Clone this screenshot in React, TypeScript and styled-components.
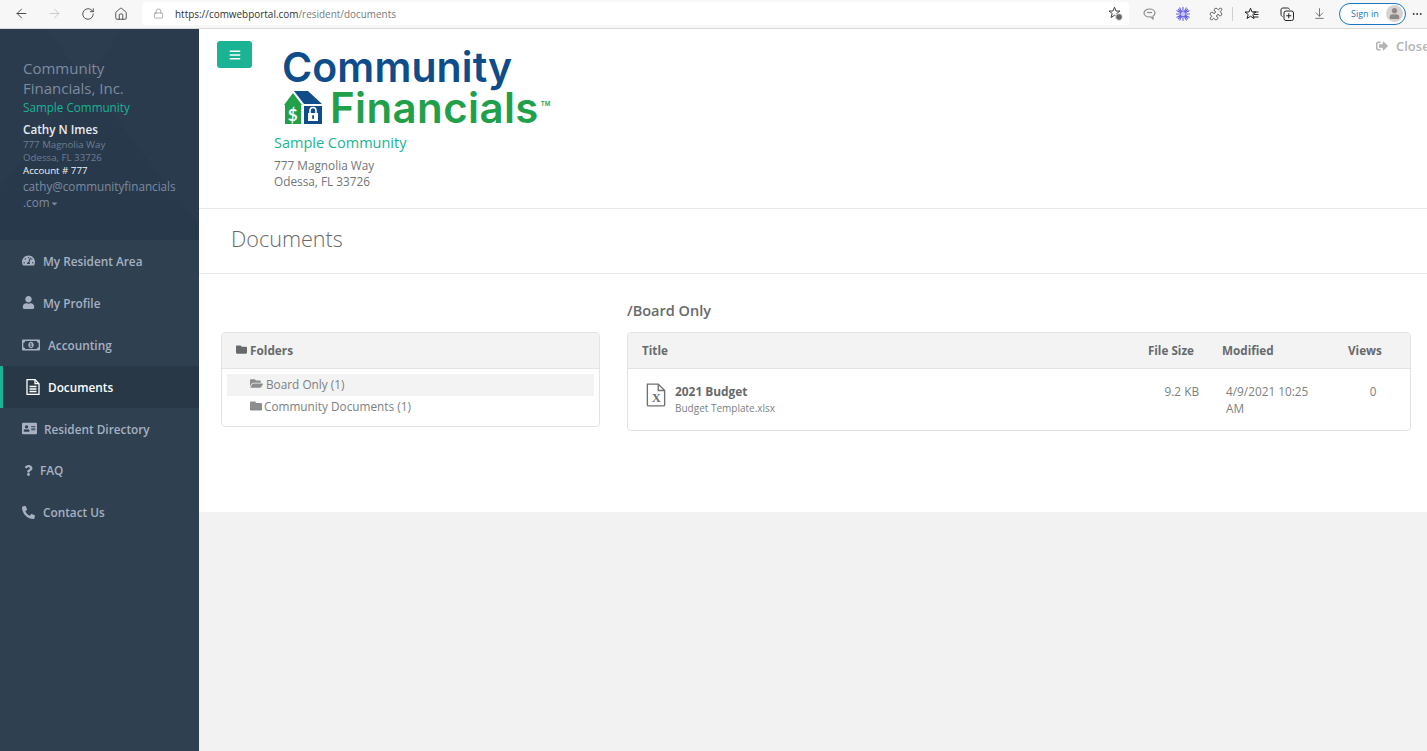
import React from "react";
import styled, { createGlobalStyle } from "styled-components";
import {
  ArrowDownToLine,
  ArrowLeft,
  ArrowRight,
  RotateCw,
  Home,
  Lock,
  Puzzle,
  MoreHorizontal,
} from "lucide-react";
import {
  FaAddressCard,
  FaBars,
  FaCaretDown,
  FaFolder,
  FaFolderOpen,
  FaPhone,
  FaQuestion,
  FaRegMoneyBillAlt,
  FaSignOutAlt,
  FaTachometerAlt,
  FaUser,
} from "react-icons/fa";

const GlobalStyle = createGlobalStyle`
  html, body {
    margin: 0;
    padding: 0;
    height: 100%;
    overflow: hidden;
    background: #f2f2f2;
    font-family: "Open Sans", "Liberation Sans", sans-serif;
    color: #676a6c;
  }
  * { box-sizing: border-box; }
`;

const Window = styled.div`
  width: 1427px;
  height: 751px;
  display: flex;
  flex-direction: column;
  overflow: hidden;
`;

/* browser chrome */
const Toolbar = styled.div`
  height: 29px;
  flex-shrink: 0;
  display: flex;
  align-items: center;
  background: #f7f7f7;
  border-bottom: 1px solid #d9d9d9;
  padding: 0 0 1px 5px;
`;

const ToolButton = styled.span<{ $faded?: boolean; $width?: number }>`
  width: ${({ $width }) => $width || 33}px;
  height: 24px;
  flex-shrink: 0;
  display: flex;
  align-items: center;
  justify-content: center;
  color: ${({ $faded }) => ($faded ? "#c4c4c4" : "#333")};
`;

const UrlBar = styled.div`
  width: 988px;
  height: 23px;
  margin-left: 5px;
  margin-right: 4px;
  padding: 0 6px 0 11px;
  display: flex;
  align-items: center;
  background: #fff;
  border-radius: 4px;
  font-size: 9.95px;
  color: #7a7a7a;
`;

const UrlHost = styled.span`
  margin-left: 11px;
  color: #333;
`;

const UrlRest = styled.span`
  flex: 1;
`;

const Divider = styled.span`
  width: 1px;
  height: 14px;
  flex-shrink: 0;
  background: #d0d0d0;
`;

const SignIn = styled.div`
  width: 67px;
  height: 22px;
  flex-shrink: 0;
  margin-left: 3px;
  padding: 0 2px 0 11px;
  display: flex;
  align-items: center;
  justify-content: space-between;
  border: 1px solid #1a76c2;
  border-radius: 11px;
  background: #fff;
  font-size: 9px;
  color: #1a76c2;
`;

const Avatar = styled.span`
  width: 17px;
  height: 17px;
  border-radius: 50%;
  background: #d6d3d0;
  display: flex;
  align-items: center;
  justify-content: center;
`;

/* page */
const Page = styled.div`
  flex: 1;
  display: flex;
  min-height: 0;
`;

const Sidebar = styled.aside`
  width: 199px;
  flex-shrink: 0;
  background: #2f4050;
`;

const Profile = styled.div`
  height: 211px;
  padding: 29px 10px 0 23px;
  background:
    linear-gradient(128deg, rgba(255, 255, 255, 0.012) 0 34%, transparent 34%),
    linear-gradient(52deg, transparent 58%, rgba(255, 255, 255, 0.01) 58%),
    #28394b;
`;

const CompanyName = styled.div`
  width: 120px;
  font-size: 15px;
  line-height: 20px;
  color: #7d8ba0;
`;

const CommunityName = styled.div`
  margin-top: 1px;
  font-size: 11.7px;
  line-height: 17px;
  color: #1ab394;
`;

const UserName = styled.div`
  margin-top: 5px;
  font-size: 11.7px;
  line-height: 17px;
  font-weight: 600;
  color: #e8ebef;
`;

const AddressLine = styled.div`
  font-size: 9.7px;
  line-height: 13px;
  color: #6d7d94;
`;

const AccountLine = styled.div`
  font-size: 9.7px;
  line-height: 14px;
  color: #f0f2f4;
`;

const Email = styled.div`
  font-size: 11.7px;
  line-height: 16px;
  white-space: nowrap;
  color: #7d8ba0;

  svg {
    width: 9px;
    height: 9px;
    vertical-align: -1px;
  }
`;

const NavList = styled.nav`
  display: flex;
  flex-direction: column;
`;

const NavItem = styled.a<{ $active?: boolean; $gap: number; $indent?: number }>`
  height: 41.9px;
  display: flex;
  align-items: center;
  gap: ${({ $gap }) => $gap}px;
  padding-left: ${({ $indent }) => $indent || 22}px;
  border-left: ${({ $active }) => ($active ? "3px solid #1ab394" : "none")};
  background: ${({ $active }) => ($active ? "#293846" : "transparent")};
  font-size: 11.8px;
  font-weight: 600;
  color: ${({ $active }) => ($active ? "#fff" : "#a7b1c2")};
`;

const Main = styled.main`
  flex: 1;
  min-width: 0;
  position: relative;
  display: flex;
  flex-direction: column;
`;

const TopSection = styled.header`
  height: 180px;
  flex-shrink: 0;
  display: flex;
  align-items: flex-start;
  padding: 12px 0 0 18px;
  background: #fff;
  border-bottom: 1px solid #e7eaec;
`;

const MenuButton = styled.button`
  width: 35px;
  height: 27px;
  padding: 0;
  display: flex;
  align-items: center;
  justify-content: center;
  border: 0;
  border-radius: 3px;
  background: #1ab394;
  color: #fff;
`;

const Brand = styled.div`
  margin-left: 22px;
`;

const Logo = styled.div`
  width: 290px;
  height: 83px;
  margin-top: 6px;
  display: flex;
  flex-direction: column;
  font-family: "Inter", sans-serif;
  font-weight: 600;
`;

const LogoTop = styled.div`
  margin: 2px 0 0 8px;
  font-size: 41px;
  line-height: 36px;
  letter-spacing: 0.1px;
  color: #0f4c8a;
`;

const LogoBottom = styled.div`
  height: 33px;
  display: flex;
  align-items: center;
  margin: 6px 0 0 10px;
  font-size: 42px;
  line-height: 33px;
  letter-spacing: 0.4px;
  color: #22a049;
`;

const LogoMark = styled.svg`
  margin-right: 8px;
  flex-shrink: 0;
`;

const Tm = styled.sup`
  font-size: 6px;
  line-height: 1;
  margin: -8px 0 0 2px;
  letter-spacing: 0;
  color: #22a049;
`;

const BrandCommunity = styled.div`
  margin-top: 3px;
  font-size: 14.5px;
  line-height: 20px;
  color: #1ab394;
`;

const BrandAddress = styled.div`
  margin-top: 4px;
  font-size: 11.8px;
  line-height: 16px;
  color: #737577;
`;

const CloseLink = styled.a`
  position: absolute;
  top: 9px;
  left: 1177px;
  display: flex;
  align-items: center;
  gap: 8px;
  font-size: 13px;
  font-weight: 600;
  line-height: 16px;
  white-space: nowrap;
  color: #b3b3b3;
`;

const TitleSection = styled.div`
  height: 65px;
  flex-shrink: 0;
  display: flex;
  align-items: center;
  padding: 0 0 5px 32px;
  background: #fff;
  border-bottom: 1px solid #e7eaec;
`;

const PageTitle = styled.h1`
  margin: 0;
  font-size: 21.6px;
  font-weight: 300;
  color: #676a6c;
`;

const Content = styled.section`
  height: 238px;
  flex-shrink: 0;
  display: grid;
  grid-template-columns: 379px 784px;
  column-gap: 27px;
  align-items: start;
  padding: 27px 0 0 22px;
  background: #fff;
`;

const Footer = styled.div`
  flex: 1;
  background: #f2f2f2;
`;

const LeftColumn = styled.div`
  padding-top: 31px;
`;

const PathTitle = styled.h3`
  margin: 0 0 11px;
  font-size: 14.5px;
  line-height: 20px;
  font-weight: 600;
  color: #676a6c;
`;

const Panel = styled.div<{ $height: number }>`
  height: ${({ $height }) => $height}px;
  border: 1px solid #e3e3e3;
  border-radius: 4px;
  overflow: hidden;
`;

const PanelHeading = styled.div`
  height: 36px;
  display: flex;
  align-items: center;
  gap: 3px;
  padding: 0 0 2px 14px;
  background: #f3f3f3;
  border-bottom: 1px solid #e3e3e3;
  font-size: 11.8px;
  font-weight: 700;
  color: #676a6c;
`;

const FolderList = styled.div`
  padding: 5px;
`;

const FolderRow = styled.div<{ $selected?: boolean }>`
  height: 22px;
  padding: 0 0 3px 23px;
  display: flex;
  align-items: center;
  gap: ${({ $selected }) => ($selected ? 3 : 2)}px;
  background: ${({ $selected }) => ($selected ? "#f3f3f3" : "transparent")};
  font-size: 11.8px;
  color: #7d7f81;
  svg {
    color: #8b8d8f;
  }
`;

const FileGrid = styled.div`
  display: grid;
  grid-template-columns: 506px 74px 126px 76px;
`;

const HeadCell = styled.div<{ $align?: string }>`
  height: 36px;
  display: flex;
  align-items: center;
  justify-content: ${({ $align }) => $align || "flex-start"};
  padding: 0 14px 2px 14px;
  background: #f3f3f3;
  border-bottom: 1px solid #e3e3e3;
  font-size: 11.7px;
  font-weight: 700;
  white-space: nowrap;
  color: #676a6c;
`;

const TitleCell = styled.div`
  display: flex;
  align-items: flex-start;
  gap: 9px;
  padding: 14px 0 0 18px;
`;

const FileName = styled.div`
  font-size: 11.9px;
  line-height: 16px;
  font-weight: 700;
  color: #676a6c;
`;

const FileMeta = styled.div`
  font-size: 10px;
  line-height: 18px;
  color: #7d7f81;
`;

const DataCell = styled.div<{ $align: string; $left: number; $right: number }>`
  padding: 14px ${({ $right }) => $right}px 0 ${({ $left }) => $left}px;
  font-size: 11.8px;
  line-height: 16.5px;
  color: #7d7f81;
  text-align: ${({ $align }) => $align};
`;

const DocumentIcon: React.FC<{ size?: number }> = () => (
  <svg width="14" height="16" viewBox="0 0 14 16" fill="none" stroke="currentColor" strokeWidth="1.3">
    <path d="M1 .7h8l4 4v10.6H1z" />
    <path d="M9 .7v4h4" />
    <path d="M3.5 7.5h7M3.5 10h7M3.5 12.5h7" />
  </svg>
);

const navItems = [
  { label: "My Resident Area", Icon: FaTachometerAlt, size: 13, gap: 8 },
  { label: "My Profile", Icon: FaUser, size: 13, gap: 8 },
  { label: "Accounting", Icon: FaRegMoneyBillAlt, size: 18, gap: 8 },
  { label: "Documents", Icon: DocumentIcon, size: 16, gap: 8, indent: 23, active: true },
  { label: "Resident Directory", Icon: FaAddressCard, size: 15, gap: 7 },
  { label: "FAQ", Icon: FaQuestion, size: 11, gap: 6, indent: 23 },
  { label: "Contact Us", Icon: FaPhone, size: 13, gap: 8, flip: true },
];

const LogoIcon = () => (
  <LogoMark width="38" height="33" viewBox="0 0 38 33">
    <path d="M0 14 9 2l9 12h-1v19H1V14z" fill="#22a049" />
    <path d="M10 0h14l14 13H20z" fill="#0f4c8a" />
    <rect x="20" y="15" width="18" height="18" fill="#0f4c8a" />
    <rect x="24" y="22" width="10" height="8" fill="#fff" />
    <path d="M26 22v-2.5a3 3 0 0 1 6 0V22" fill="none" stroke="#fff" strokeWidth="1.6" />
    <rect x="28.2" y="24.3" width="1.8" height="3.5" fill="#0f4c8a" />
    <text x="9" y="30" textAnchor="middle" fontSize="17" fontWeight="700" fontFamily="Lato" fill="#fff">
      $
    </text>
  </LogoMark>
);

const ExcelFileIcon = () => (
  <svg width="20" height="24" viewBox="0 0 22 26" fill="none" stroke="#6f7173" strokeWidth="1.5">
    <path d="M1.5 1h12l7 7v16a1 1 0 0 1-1 1h-17a1 1 0 0 1-1-1z" />
    <path d="M13.5 1v7h7" />
    <text x="11.5" y="21" textAnchor="middle" fontSize="14" fontWeight="700" fontFamily="Liberation Serif" stroke="none" fill="#6f7173">
      X
    </text>
  </svg>
);

const starPath = "M6.5 1.2 8 5h4l-3.2 2.5L10 11.5 6.5 9.2 3 11.5l1.2-4L1 5h4z";

const BadgedStarIcon = () => (
  <svg width="15" height="15" viewBox="0 0 15 15" fill="none" stroke="#444" strokeWidth="1">
    <path d={starPath} />
    <circle cx="11" cy="11" r="3.4" fill="#666" stroke="#fff" strokeWidth=".8" />
  </svg>
);

const CommentIcon = () => (
  <svg width="13" height="12" viewBox="0 0 13 12" fill="none" stroke="#8d8d8d" strokeWidth="1.2">
    <path d="M6.5 1C3.4 1 1 2.8 1 5s2.4 4 5.5 4c.5 0 1 0 1.4-.1L10 11V8.2C11.2 7.5 12 6.3 12 5c0-2.2-2.4-4-5.5-4z" />
    <path d="M4 4.5h5" />
  </svg>
);

const BurstIcon = () => (
  <svg width="14" height="14" viewBox="0 0 14 14" stroke="#6a63e8" strokeWidth="1.1">
    <path d="M7 0v14M0 7h14M2 2l10 10M12 2 2 12M3.5 .5l7 13M10.5 .5l-7 13M.5 3.5l13 7M.5 10.5l13-7" />
    <circle cx="7" cy="7" r="2.2" fill="#c9c6fa" stroke="none" />
  </svg>
);

const FavoritesIcon = () => (
  <svg width="15" height="13" viewBox="0 0 15 13" fill="none" stroke="#222" strokeWidth="1">
    <path d={starPath} />
    <path d="M9.5 5H14.5M10 7.5h4.5M10 10h4.5" />
  </svg>
);

const CollectionsIcon = () => (
  <svg width="14" height="14" viewBox="0 0 14 14" fill="none" stroke="#222" strokeWidth="1">
    <path d="M2.5 9.5C1.5 9 1 8.5 1 7.5V3c0-1.2.8-2 2-2h4.5c1 0 1.7.5 2 1.5" />
    <rect x="4" y="4" width="9.5" height="9.5" rx="2" />
    <path d="M8.75 6.3v5M6.3 8.75h5" />
  </svg>
);

const App: React.FC = () => (
  <Window>
    <GlobalStyle />
    <Toolbar>
      <ToolButton><ArrowLeft size={15} strokeWidth={1.4} /></ToolButton>
      <ToolButton $faded><ArrowRight size={15} strokeWidth={1.4} /></ToolButton>
      <ToolButton><RotateCw size={14} strokeWidth={1.4} /></ToolButton>
      <ToolButton><Home size={14} strokeWidth={1.4} /></ToolButton>
      <UrlBar>
        <Lock size={11} strokeWidth={1.3} />
        <UrlHost>https://comwebportal.com</UrlHost>
        <UrlRest>/resident/documents</UrlRest>
        <BadgedStarIcon />
      </UrlBar>
      <ToolButton><CommentIcon /></ToolButton>
      <ToolButton><BurstIcon /></ToolButton>
      <ToolButton><Puzzle size={14} strokeWidth={1.3} /></ToolButton>
      <Divider />
      <ToolButton $width={37}><FavoritesIcon /></ToolButton>
      <ToolButton><CollectionsIcon /></ToolButton>
      <ToolButton><ArrowDownToLine size={13} strokeWidth={1.2} /></ToolButton>
      <SignIn>
        Sign in
        <Avatar><FaUser size={11} color="#8c8987" /></Avatar>
      </SignIn>
      <ToolButton $width={21}><MoreHorizontal size={12} /></ToolButton>
    </Toolbar>
    <Page>
      <Sidebar>
        <Profile>
          <CompanyName>Community Financials, Inc.</CompanyName>
          <CommunityName>Sample Community</CommunityName>
          <UserName>Cathy N Imes</UserName>
          <AddressLine>777 Magnolia Way</AddressLine>
          <AddressLine>Odessa, FL 33726</AddressLine>
          <AccountLine>Account # 777</AccountLine>
          <Email>
            cathy@communityfinancials
            <br />
            .com<FaCaretDown />
          </Email>
        </Profile>
        <NavList>
          {navItems.map(({ label, Icon, size, gap, indent, active, flip }) => (
            <NavItem key={label} $active={active} $gap={gap} $indent={indent}>
              <Icon size={size} style={flip ? { transform: "scaleX(-1)" } : undefined} />
              {label}
            </NavItem>
          ))}
        </NavList>
      </Sidebar>
      <Main>
        <TopSection>
          <MenuButton aria-label="Menu"><FaBars size={12} /></MenuButton>
          <Brand>
            <Logo>
              <LogoTop>Community</LogoTop>
              <LogoBottom>
                <LogoIcon />
                Financials
                <Tm>TM</Tm>
              </LogoBottom>
            </Logo>
            <BrandCommunity>Sample Community</BrandCommunity>
            <BrandAddress>
              777 Magnolia Way
              <br />
              Odessa, FL 33726
            </BrandAddress>
          </Brand>
        </TopSection>
        <CloseLink><FaSignOutAlt size={12} /> Close</CloseLink>
        <TitleSection>
          <PageTitle>Documents</PageTitle>
        </TitleSection>
        <Content>
          <LeftColumn>
            <Panel $height={95}>
              <PanelHeading><FaFolder size={11} />Folders</PanelHeading>
              <FolderList>
                <FolderRow $selected><FaFolderOpen size={13} />Board Only (1)</FolderRow>
                <FolderRow><FaFolder size={12} />Community Documents (1)</FolderRow>
              </FolderList>
            </Panel>
          </LeftColumn>
          <div>
            <PathTitle>/Board Only</PathTitle>
            <Panel $height={99}>
              <FileGrid>
                <HeadCell>Title</HeadCell>
                <HeadCell $align="flex-end">File Size</HeadCell>
                <HeadCell>Modified</HeadCell>
                <HeadCell>Views</HeadCell>
                <TitleCell>
                  <ExcelFileIcon />
                  <div>
                    <FileName>2021 Budget</FileName>
                    <FileMeta>Budget Template.xlsx</FileMeta>
                  </div>
                </TitleCell>
                <DataCell $align="right" $left={0} $right={9}>9.2 KB</DataCell>
                <DataCell $align="left" $left={18} $right={8}>4/9/2021 10:25 AM</DataCell>
                <DataCell $align="center" $left={2} $right={0}>0</DataCell>
              </FileGrid>
            </Panel>
          </div>
        </Content>
        <Footer />
      </Main>
    </Page>
  </Window>
);

export default App;
